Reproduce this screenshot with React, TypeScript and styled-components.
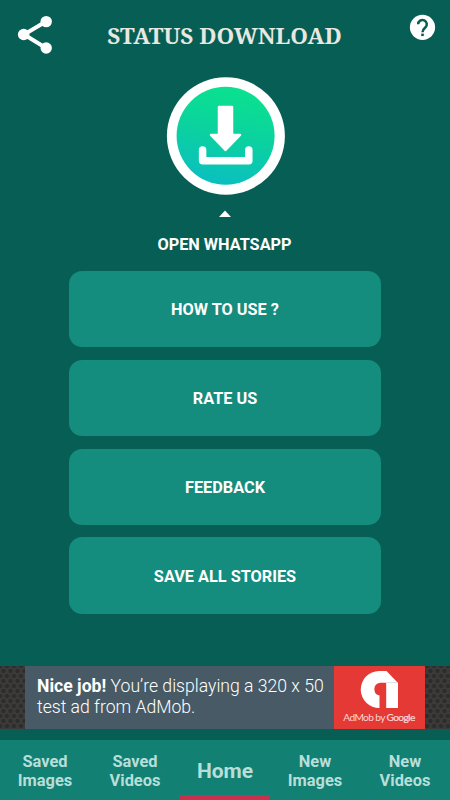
import React from "react";
import styled, { createGlobalStyle } from "styled-components";

const GlobalStyle = createGlobalStyle`
  * { box-sizing: border-box; }
  html, body { margin: 0; padding: 0; background: #075e54; }
  body { font-family: Roboto, sans-serif; color: #fff; }
`;

const Screen = styled.div`
  width: 450px;
  height: 800px;
  background: #075e54;
  display: flex;
  flex-direction: column;
  align-items: center;
  overflow: hidden;
`;

const Header = styled.header`
  width: 100%;
  height: 77px;
  padding: 14px 14px 0 17px;
  display: grid;
  grid-template-columns: 36px 1fr 27px;
  align-items: start;
`;

const IconButton = styled.button`
  display: flex;
  padding: 0;
  border: 0;
  background: none;
`;

const Title = styled.h1`
  margin: 8px 13px 0 0;
  justify-self: center;
  font: 700 22.5px/28px "Noto Serif", "Liberation Serif", serif;
  color: #e8e8e0;
  white-space: nowrap;
`;

const LaunchButton = styled.button`
  display: flex;
  flex-direction: column;
  align-items: center;
  padding: 0;
  border: 0;
  background: none;
  color: #fff;
  font: 700 16.3px/20px Roboto, sans-serif;
`;

const LaunchLabel = styled.span`
  padding-right: 1px;
`;

const Caret = styled.svg`
  margin: 15px 0 18px;
`;

const Actions = styled.main`
  display: flex;
  flex-direction: column;
  gap: 12.4px;
  margin-top: 16px;
`;

const ActionButton = styled.button`
  width: 312.5px;
  height: 76.4px;
  padding: 2px 0 0;
  border: 0;
  border-radius: 13px;
  background: #148c7e;
  color: #fff;
  font: 700 16.3px/20px Roboto, sans-serif;
`;

const AdStrip = styled.aside`
  width: 100%;
  height: 63px;
  margin-top: auto;
  display: flex;
  justify-content: center;
  background-color: #3d3b39;
  background-image: radial-gradient(circle, #2c2c2c 1.7px, transparent 2.6px),
    radial-gradient(circle, #2c2c2c 1.7px, transparent 2.6px);
  background-size: 7px 10px;
  background-position: 0 0, 3.5px 5px;
`;

const AdCopy = styled.p`
  width: 309px;
  margin: 0;
  padding: 10px 0 0 12px;
  background: #475a66;
  font: 300 17.6px/21px Roboto, sans-serif;
  white-space: nowrap;
  b { font-weight: 700; }
`;

const AdBrand = styled.div`
  width: 91px;
  display: flex;
  flex-direction: column;
  align-items: center;
  padding: 4px 1px 0 0;
  background: #e53935;
  color: #fbd3d0;
  font: 400 10.2px/15px Lato, sans-serif;
  letter-spacing: -0.65px;
  white-space: nowrap;
`;

const BrandName = styled.span`
  margin-top: 1px;
  b { font-weight: 500; -webkit-text-stroke: 0.2px #fbd3d0; }
`;

const Tabs = styled.nav`
  width: 100%;
  height: 60px;
  margin-top: 11px;
  display: grid;
  grid-template-columns: repeat(5, 1fr);
  background: #128173;
`;

const Tab = styled.button<{ $active?: boolean }>`
  display: flex;
  align-items: center;
  justify-content: center;
  padding: ${(p) => (p.$active ? "7px 0 0" : "2px 0 0")};
  border: 0;
  border-bottom: ${(p) => (p.$active ? "5px solid #c9304c" : "0")};
  background: none;
  color: #b9ded8;
  font: 700 ${(p) => (p.$active ? "21px/24px" : "16.4px/19px")} Roboto, sans-serif;
  white-space: pre-line;
`;

const actions = ["HOW TO USE ?", "RATE US", "FEEDBACK", "SAVE ALL STORIES"];
const tabs = ["Saved\nImages", "Saved\nVideos", "Home", "New\nImages", "New\nVideos"];

const ShareIcon = () => (
  <svg width="36" height="42" viewBox="0 0 36 42">
    <path d="M29 7.5 7 20.5l22 13.5" fill="none" stroke="#fff" strokeWidth="4" />
    <circle cx="29.2" cy="7.6" r="5.7" fill="#fff" />
    <circle cx="6.7" cy="20.5" r="5.8" fill="#fff" />
    <circle cx="29.2" cy="34" r="5.7" fill="#fff" />
  </svg>
);

const HelpIcon = () => (
  <svg width="27" height="27" viewBox="0 0 27 27">
    <circle cx="13.5" cy="13.3" r="12.6" fill="#fff" />
    <path d="M9.2 10.3a4.3 4.3 0 1 1 7.1 3.2c-1.6 1.4-2.8 2.3-2.8 4.7" fill="none" stroke="#075e54" strokeWidth="2.5" />
    <rect x="12.2" y="19.6" width="2.6" height="2.5" fill="#075e54" />
  </svg>
);

const DownloadLogo = () => (
  <svg width="120" height="118" viewBox="0 0 120 118">
    <defs>
      <linearGradient id="disc" x1="0.6" y1="0" x2="0.4" y2="1">
        <stop offset="0" stopColor="#0ae28e" />
        <stop offset="0.5" stopColor="#0bd1a0" />
        <stop offset="1" stopColor="#0abfc0" />
      </linearGradient>
    </defs>
    <ellipse cx="60.9" cy="59" rx="59" ry="58.7" fill="#fff" />
    <circle cx="60.6" cy="58.8" r="49" fill="url(#disc)" />
    <path
      d="M54 30h13v28h8L60.5 73 46 58h8z"
      fill="#fff" stroke="#fff" strokeWidth="2.5" strokeLinejoin="round"
    />
    <path d="M37.6 73v10.7h46.2V73" fill="none" stroke="#fff" strokeWidth="7.5" strokeLinecap="round" strokeLinejoin="round" />
  </svg>
);

const AdMobMark = () => (
  <svg width="38" height="39" viewBox="0 0 38 39">
    <path d="M19.5 38A18.500 18.500 0 1 1 19 1h7.500L38 13v25H26.200V12.800H20a6.500 6.500 0 0 0-.5 12.800z" fill="#fff" />
    <path d="M26.5 12.5H38" stroke="#cdd3df" strokeWidth="0.7" />
  </svg>
);

export default function App() {
  return (
    <>
      <GlobalStyle />
      <Screen>
        <Header>
          <IconButton aria-label="Share"><ShareIcon /></IconButton>
          <Title>STATUS DOWNLOAD</Title>
          <IconButton aria-label="Help"><HelpIcon /></IconButton>
        </Header>
        <LaunchButton>
          <DownloadLogo />
          <Caret width="12" height="7" viewBox="0 0 12 7">
            <path d="M0 7 6 .5 12 7z" fill="#fff" />
          </Caret>
          <LaunchLabel>OPEN WHATSAPP</LaunchLabel>
        </LaunchButton>
        <Actions>
          {actions.map((label) => <ActionButton key={label}>{label}</ActionButton>)}
        </Actions>
        <AdStrip>
          <AdCopy>
            <b>Nice job!</b> You’re displaying a 320 x 50<br />test ad from AdMob.
          </AdCopy>
          <AdBrand>
            <AdMobMark />
            <BrandName>AdMob by <b>Google</b></BrandName>
          </AdBrand>
        </AdStrip>
        <Tabs>
          {tabs.map((label) => <Tab key={label} $active={label === "Home"}>{label}</Tab>)}
        </Tabs>
      </Screen>
    </>
  );
}
